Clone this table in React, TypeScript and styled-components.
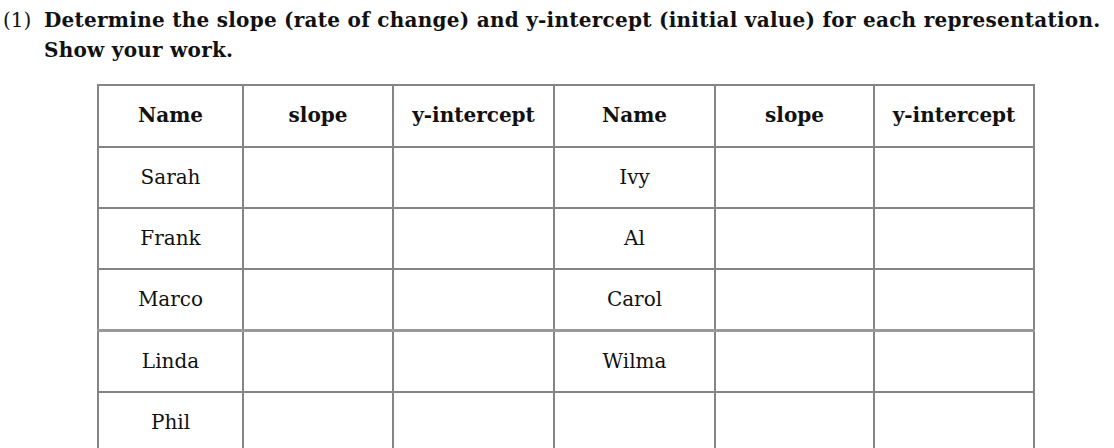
import React from "react";
import styled, { createGlobalStyle } from "styled-components";

const Global = createGlobalStyle`
  html, body { margin: 0; padding: 0; background: #fff; }
  body { font-family: "DejaVu Serif", "Liberation Serif", serif; color: #111; }
`;

const Page = styled.div`
  width: 1114px;
  height: 448px;
  overflow: hidden;
  box-sizing: border-box;
  padding: 5px 0 0 3px;
`;

const Question = styled.div`
  display: grid;
  grid-template-columns: 41px 1fr;
  font-size: 20px;
  line-height: 30px;
  white-space: nowrap;
`;

const Num = styled.span`
  font-weight: 400;
`;

const Prompt = styled.span`
  font-weight: 700;
  letter-spacing: 0.26px;
`;

const TableWrap = styled.div`
  margin: 19px 0 0 94px;
`;

const Grid = styled.table`
  border-collapse: collapse;
  table-layout: fixed;
  width: 938px;
`;

const Cell = styled.td<{ $head?: boolean; $thick?: boolean }>`
  border: 2px solid #858585;
  ${(p) => (p.$thick ? "border-top: 3px solid #999;" : "")}
  height: ${(p) => (p.$head ? "58px" : "57px")};
  padding: 0 0 2px;
  text-align: center;
  vertical-align: middle;
  font-size: 20px;
  font-weight: ${(p) => (p.$head ? 700 : 400)};
`;

const widths = [145, 150, 161, 161, 159, 160];
const heads = ["Name", "slope", "y-intercept", "Name", "slope", "y-intercept"];
const rows: [string, string][] = [
  ["Sarah", "Ivy"],
  ["Frank", "Al"],
  ["Marco", "Carol"],
  ["Linda", "Wilma"],
  ["Phil", ""],
];

export default function App() {
  return (
    <>
      <Global />
      <Page>
        <Question>
          <Num>(1)</Num>
          <Prompt>
            Determine the slope (rate of change) and y-intercept (initial value) for each representation.
            <br />
            Show your work.
          </Prompt>
        </Question>
        <TableWrap>
          <Grid>
            <colgroup>
              {widths.map((w, i) => (
                <col key={i} style={{ width: w }} />
              ))}
            </colgroup>
            <thead>
              <tr>
                {heads.map((h, i) => (
                  <Cell as="th" $head key={i}>
                    {h}
                  </Cell>
                ))}
              </tr>
            </thead>
            <tbody>
              {rows.map(([a, b], r) => (
                <tr key={r}>
                  <Cell $thick={r === 3}>{a}</Cell>
                  <Cell $thick={r === 3} />
                  <Cell $thick={r === 3} />
                  <Cell $thick={r === 3}>{b}</Cell>
                  <Cell $thick={r === 3} />
                  <Cell $thick={r === 3} />
                </tr>
              ))}
            </tbody>
          </Grid>
        </TableWrap>
      </Page>
    </>
  );
}
